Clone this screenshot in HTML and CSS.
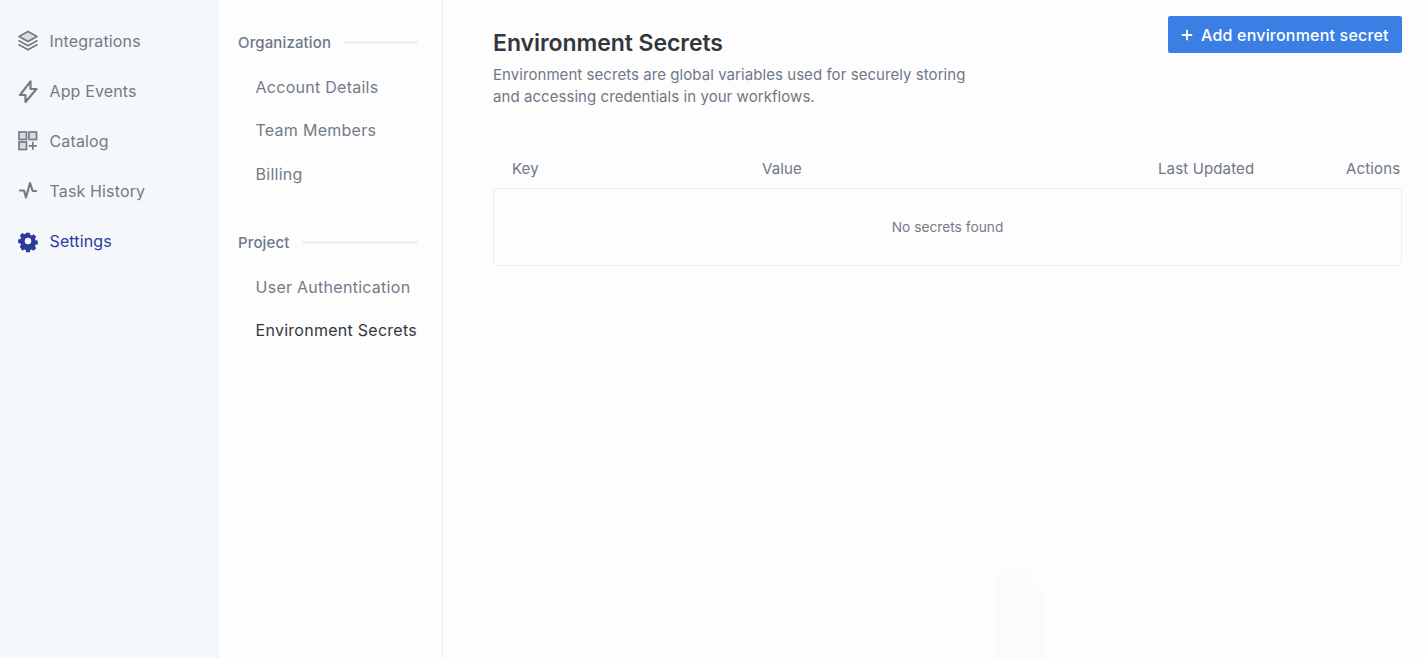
FILE: index.html
```html
<!DOCTYPE html>
<html lang="en">
<head>
<meta charset="utf-8">
<title>Environment Secrets</title>
<link rel="stylesheet" href="styles.css">
</head>
<body>
<div class="app">
  <nav class="rail">
    <a class="rail-item">
      <svg class="rail-icon" viewBox="0 0 20 20" stroke="currentColor" stroke-width="1.7" stroke-linejoin="round" stroke-linecap="round" fill="none"><path class="tone" d="M10 .5 1 5.500 10 10.500 19 5.500z"/><path d="M1 9.800 10 14.800 19 9.800"/><path d="M1 13.800 10 18.800 19 13.800"/></svg>
      <span>Integrations</span>
    </a>
    <a class="rail-item">
      <svg class="rail-icon" viewBox="0 0 20 20" fill="none" stroke="currentColor" stroke-width="2.200" stroke-linejoin="round" stroke-linecap="round"><path d="M12.500.3 2 14H7.500V21L18.500 8H12.500z"/></svg>
      <span>App Events</span>
    </a>
    <a class="rail-item">
      <svg class="rail-icon" viewBox="0 0 20 20" fill="none" stroke="currentColor" stroke-width="1.7"><rect class="tone" x="1" y="1" width="7.500" height="7.500"/><rect class="tone" x="11" y="1" width="7.500" height="7.500"/><rect class="tone" x="1" y="11" width="7.500" height="7.500"/><path d="M14.800 10.800v8M10.800 14.800h8"/></svg>
      <span>Catalog</span>
    </a>
    <a class="rail-item">
      <svg class="rail-icon" viewBox="0 0 20 20" fill="none" stroke="currentColor" stroke-width="2.200" stroke-linejoin="round" stroke-linecap="round"><path d="M2 9.500H6L8 16.500 12 2 14.700 10H18"/></svg>
      <span>Task History</span>
    </a>
    <a class="rail-item active">
      <svg class="rail-icon" viewBox="0 0 20 20"><path fill="currentColor" fill-rule="evenodd" d="M8 .8h4l.5 2.500 1.600.7 2.200-1.400 2.800 2.800-1.400 2.200.7 1.600 2.500.5v4l-2.500.5-.7 1.600 1.400 2.200-2.800 2.800-2.200-1.400-1.600.7-.5 2.500H8l-.5-2.500-1.600-.7-2.200 1.400L.9 16.500l1.400-2.200-.7-1.600L-.9 12.200v-4l2.500-.5.7-1.600L.9 3.900l2.800-2.800 2.200 1.400 1.600-.7zM10 6.500a3.600 3.600 0 1 0 0 7.200 3.600 3.600 0 0 0 0-7.200z" transform="translate(1 1) scale(.9)"/></svg>
      <span>Settings</span>
    </a>
  </nav>
  <aside class="subnav">
    <div class="group-head org"><span>Organization</span><i class="group-rule"></i></div>
    <a class="sub-item">Account Details</a>
    <a class="sub-item">Team Members</a>
    <a class="sub-item">Billing</a>
    <div class="group-head project"><span>Project</span><i class="group-rule"></i></div>
    <a class="sub-item">User Authentication</a>
    <a class="sub-item current">Environment Secrets</a>
  </aside>
  <main class="content">
    <header class="page-head">
      <div class="page-title">
        <h1>Environment Secrets</h1>
        <p>Environment secrets are global variables used for securely storing<br>and accessing credentials in your workflows.</p>
      </div>
      <button class="add-btn" type="button">
        <svg viewBox="0 0 12 12" width="12" height="12" fill="none" stroke="currentColor" stroke-width="1.8"><path d="M6 .8v10.400M.8 6h10.400"/></svg>
        <span>Add environment secret</span>
      </button>
    </header>
    <div class="table-head">
      <span class="col-key">Key</span>
      <span class="col-value">Value</span>
      <span class="col-updated">Last Updated</span>
      <span class="col-actions">Actions</span>
    </div>
    <div class="table-body">No secrets found</div>
    <div class="watermark"></div>
  </main>
</div>
</body>
</html>
```

FILE: styles.css
```css
* { box-sizing: border-box; }
html, body { height: 100%; }
body {
  margin: 0;
  font-family: Inter, "Liberation Sans", sans-serif;
  background: #fdfdfe;
  color: #6f7885;
  overflow: hidden;
}
.app { display: flex; height: 658px; }
.rail {
  width: 218px;
  flex: none;
  background: #f5f8fa;
  border-right: 1px solid #e8edf3;
  padding-top: 16px;
}
.rail-item {
  display: flex;
  align-items: center;
  gap: 11.500px;
  height: 50px;
  padding-left: 18px;
  font-size: 16px;
  letter-spacing: .14px;
  color: #737b87;
}
.rail-item.active { color: #2b3a9b; }
.rail-icon { width: 20px; height: 20px; flex: none; overflow: visible; }
.tone { fill: #d9dcdf; }
.subnav {
  width: 225px;
  flex: none;
  border-right: 1px solid #e8edf3;
  background: #fdfdfe;
  padding: 33px 24px 0 20px;
}
.group-head {
  display: flex;
  align-items: center;
  gap: 13px;
  height: 18px;
  font-size: 15px;
  font-weight: 500;
  letter-spacing: .13px;
  color: #6f7885;
  margin-bottom: 18px;
  white-space: nowrap;
}
.group-head.org { margin-bottom: 18.500px; }
.group-head.project { margin-top: 33.500px; }
.group-rule {
  flex: 1;
  height: 3px;
  border-radius: 2px;
  background: #edf0f7;
}
.sub-item {
  display: block;
  height: 43.600px;
  line-height: 35px;
  padding-left: 17.500px;
  font-size: 16px;
  letter-spacing: .27px;
  color: #737b87;
  white-space: nowrap;
}
.sub-item.current { color: #33373d; }
.content {
  flex: 1;
  min-width: 0;
  position: relative;
  padding: 16px 24px 0 50px;
}
.page-head { display: flex; justify-content: space-between; align-items: flex-start; }
.page-title h1 {
  margin: 12px 0 0;
  font-size: 23px;
  letter-spacing: -.05px;
  line-height: 30px;
  font-weight: 600;
  color: #33373d;
}
.page-title p {
  margin: 6px 0 0;
  font-size: 15px;
  letter-spacing: .06px;
  line-height: 22px;
  color: #6f7885;
}
.add-btn {
  display: flex;
  align-items: center;
  gap: 8px;
  height: 37px;
  width: 234px;
  padding: 0 0 0 13px;
  border: 0;
  border-radius: 2px;
  background: #3b7fe4;
  color: #fff;
  font: 500 16px Inter, "Liberation Sans", sans-serif;
  letter-spacing: .2px;
  white-space: nowrap;
}
.table-head {
  display: flex;
  align-items: center;
  height: 26px;
  margin-top: 47px;
  font-size: 15px;
  letter-spacing: .14px;
  color: #6f7885;
  white-space: nowrap;
}
.col-key { width: 269px; padding-left: 19px; }
.col-value { flex: 1; }
.col-updated { width: 188px; }
.col-actions { width: 56px; }
.table-body {
  height: 78px;
  margin-top: 7px;
  border: 1px solid #e9eef6;
  border-radius: 4px;
  display: flex;
  align-items: center;
  justify-content: center;
  font-size: 13.750px;
  color: #737b87;
  background: #fdfdfe;
}
.watermark {
  position: absolute;
  left: 552px;
  bottom: 0;
  width: 50px;
  height: 85px;
  background: #fbfbfc;
  clip-path: polygon(0 0, 75% 0, 75% 20%, 100% 20%, 100% 100%, 0 100%);
}
```
